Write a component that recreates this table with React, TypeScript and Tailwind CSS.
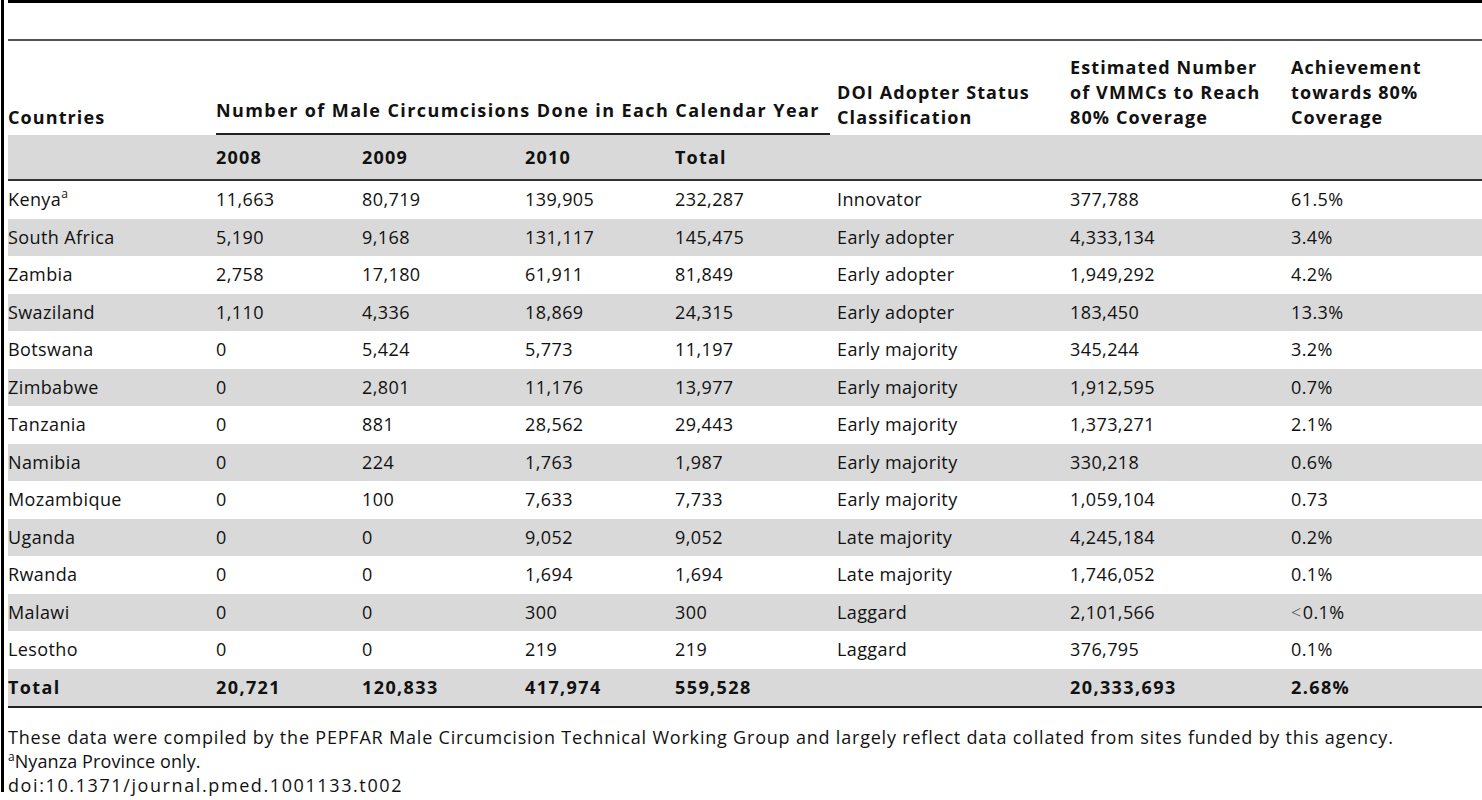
const rows: [string, string, string, string, string, string, string, string][] = [
  ["Kenya", "11,663", "80,719", "139,905", "232,287", "Innovator", "377,788", "61.5%"],
  ["South Africa", "5,190", "9,168", "131,117", "145,475", "Early adopter", "4,333,134", "3.4%"],
  ["Zambia", "2,758", "17,180", "61,911", "81,849", "Early adopter", "1,949,292", "4.2%"],
  ["Swaziland", "1,110", "4,336", "18,869", "24,315", "Early adopter", "183,450", "13.3%"],
  ["Botswana", "0", "5,424", "5,773", "11,197", "Early majority", "345,244", "3.2%"],
  ["Zimbabwe", "0", "2,801", "11,176", "13,977", "Early majority", "1,912,595", "0.7%"],
  ["Tanzania", "0", "881", "28,562", "29,443", "Early majority", "1,373,271", "2.1%"],
  ["Namibia", "0", "224", "1,763", "1,987", "Early majority", "330,218", "0.6%"],
  ["Mozambique", "0", "100", "7,633", "7,733", "Early majority", "1,059,104", "0.73"],
  ["Uganda", "0", "0", "9,052", "9,052", "Late majority", "4,245,184", "0.2%"],
  ["Rwanda", "0", "0", "1,694", "1,694", "Late majority", "1,746,052", "0.1%"],
  ["Malawi", "0", "0", "300", "300", "Laggard", "2,101,566", "<0.1%"],
  ["Lesotho", "0", "0", "219", "219", "Laggard", "376,795", "0.1%"],
];

const cols = "grid grid-cols-[208px_146px_163px_150px_162px_233px_221px_1fr]";

export default function App() {
  return (
    <div
      className="w-[1482px] h-[800px] bg-white text-[#111] overflow-hidden"
      style={{ fontFamily: '"Open Sans", "Liberation Sans", sans-serif' }}
    >
      <div className="ml-[1px] h-[792px] border-l-[3px] border-black pl-[4px] text-[18px]">
        <div className="h-[3px] bg-black" />
        <div className="h-[36px]" />
        <div className="h-[2px] bg-[#555]" />

        {/* header */}
        <div className={`${cols} h-[94px] items-end font-bold leading-[25px] tracking-[1.1px] whitespace-nowrap`}>
          <div className="pb-[5px]">Countries</div>
          <div className="col-span-4 mr-[7px] border-b-[2px] border-[#222] pb-[10px] tracking-[1.4px]">
            Number of Male Circumcisions Done in Each Calendar Year
          </div>
          <div className="pb-[5px]">
            DOI Adopter Status
            <br />
            Classification
          </div>
          <div className="pb-[5px]">
            Estimated Number
            <br />
            of VMMCs to Reach
            <br />
            80% Coverage
          </div>
          <div className="pb-[5px]">
            Achievement
            <br />
            towards 80%
            <br />
            Coverage
          </div>
        </div>
        <div className={`${cols} h-[44px] items-center bg-[#d9d9d9] font-bold tracking-[1.2px]`}>
          <div />
          <div>2008</div>
          <div>2009</div>
          <div>2010</div>
          <div>Total</div>
          <div />
          <div />
          <div />
        </div>
        <div className="h-[2px] bg-[#333]" />

        {/* body */}
        {rows.map((r, i) => (
          <div
            key={r[0]}
            className={`${cols} h-[37.5px] items-center tracking-[0.4px] ${i % 2 === 1 ? "bg-[#d9d9d9]" : "bg-white"}`}
          >
            <div>
              {r[0]}
              {i === 0 && <sup className="relative -top-[8px] text-[12px] tracking-normal">a</sup>}
            </div>
            <div>{r[1]}</div>
            <div>{r[2]}</div>
            <div>{r[3]}</div>
            <div>{r[4]}</div>
            <div>{r[5]}</div>
            <div>{r[6]}</div>
            <div>
              {r[7].startsWith("<") ? (
                <>
                  <span className="mr-[1px] font-light text-[#444]">&lt;</span>
                  {r[7].slice(1)}
                </>
              ) : (
                r[7]
              )}
            </div>
          </div>
        ))}
        <div className={`${cols} h-[37.5px] items-center bg-[#d9d9d9] font-bold tracking-[1.4px]`}>
          <div>Total</div>
          <div>20,721</div>
          <div>120,833</div>
          <div>417,974</div>
          <div>559,528</div>
          <div />
          <div>20,333,693</div>
          <div>2.68%</div>
        </div>
        <div className="h-[2px] bg-[#222]" />

        {/* footnotes */}
        <div className="mt-[17px] leading-[24px] whitespace-nowrap">
          <p className="tracking-[0.8px]">
            These data were compiled by the PEPFAR Male Circumcision Technical Working Group and largely reflect data
            collated from sites funded by this agency.
          </p>
          <p className="tracking-[0.1px]">
            <sup className="relative -top-[7px] text-[12px] tracking-normal">a</sup>Nyanza Province only.
          </p>
          <p className="tracking-[1.6px]">doi:10.1371/journal.pmed.1001133.t002</p>
        </div>
      </div>
    </div>
  );
}
